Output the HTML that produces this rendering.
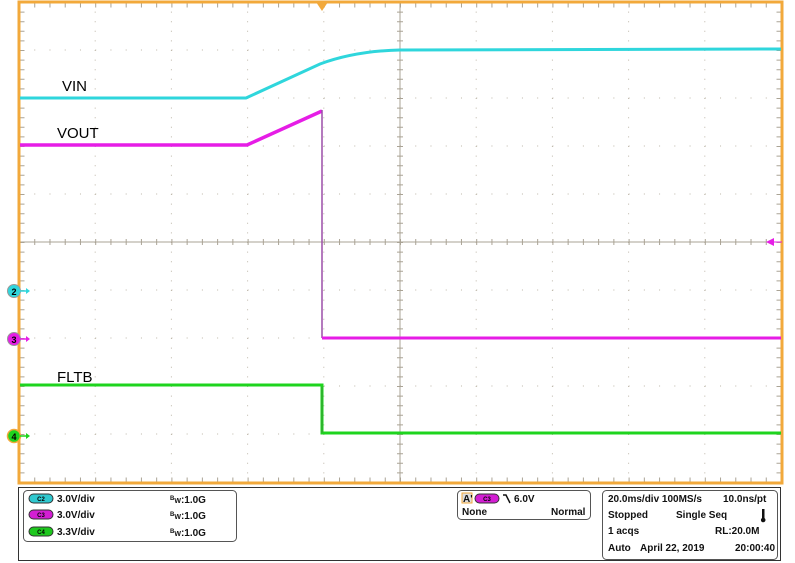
<!DOCTYPE html>
<html><head><meta charset="utf-8"><style>
html,body{margin:0;padding:0;background:#fff;width:795px;height:563px;overflow:hidden}
svg{display:block}
text{font-family:"Liberation Sans",Arial,sans-serif}
.b{font-weight:bold;font-size:10px;fill:#111}
</style></head><body>
<svg width="795" height="563" viewBox="0 0 795 563">
<g stroke="#bdb6a8" stroke-width="1" fill="none">
 <!-- dotted verticals -->
 <g stroke-dasharray="1 8.6">
  <line x1="95.2" y1="2" x2="95.2" y2="483"/><line x1="171.4" y1="2" x2="171.4" y2="483"/>
  <line x1="247.6" y1="2" x2="247.6" y2="483"/><line x1="323.8" y1="2" x2="323.8" y2="483"/>
  <line x1="476.2" y1="2" x2="476.2" y2="483"/><line x1="552.4" y1="2" x2="552.4" y2="483"/>
  <line x1="628.6" y1="2" x2="628.6" y2="483"/><line x1="704.8" y1="2" x2="704.8" y2="483"/>
 </g>
 <g stroke-dasharray="1 14.24">
  <line x1="19" y1="50" x2="782" y2="50"/><line x1="19" y1="98" x2="782" y2="98"/>
  <line x1="19" y1="146" x2="782" y2="146"/><line x1="19" y1="194" x2="782" y2="194"/>
  <line x1="19" y1="290" x2="782" y2="290"/><line x1="19" y1="338" x2="782" y2="338"/>
  <line x1="19" y1="386" x2="782" y2="386"/><line x1="19" y1="434" x2="782" y2="434"/>
 </g>
 <!-- center lines -->
 <line x1="19" y1="242" x2="782" y2="242" stroke="#aaa395"/>
 <line x1="400" y1="2" x2="400" y2="483" stroke="#aaa395"/>
 <line x1="19" y1="242" x2="782" y2="242" stroke="#aaa395" stroke-width="6" stroke-dasharray="1 14.24"/>
 <line x1="400" y1="2" x2="400" y2="483" stroke="#aaa395" stroke-width="6" stroke-dasharray="1 8.6"/>
 <!-- border ticks -->
 <line x1="19" y1="5" x2="782" y2="5" stroke="#aaa395" stroke-width="5" stroke-dasharray="1 14.24"/>
 <line x1="19" y1="480" x2="782" y2="480" stroke="#aaa395" stroke-width="5" stroke-dasharray="1 14.24"/>
 <line x1="22" y1="2" x2="22" y2="483" stroke="#aaa395" stroke-width="5" stroke-dasharray="1 8.6"/>
 <line x1="779" y1="2" x2="779" y2="483" stroke="#aaa395" stroke-width="5" stroke-dasharray="1 8.6"/>
</g>
<rect x="19" y="2" width="763" height="481" fill="none" stroke="#f2a93b" stroke-width="3"/>
<!-- traces -->
<path d="M20 98 L246 98 L320 64 Q355 51 400 50 L781 49" fill="none" stroke="#2fd6dc" stroke-width="3"/>
<path d="M20 145 L247 145 L322 111" fill="none" stroke="#e61de6" stroke-width="3.5"/>
<line x1="322" y1="110" x2="322" y2="338" stroke="#9b4fa8" stroke-width="1.5"/>
<line x1="322" y1="338" x2="781" y2="338" stroke="#e61de6" stroke-width="3"/>
<path d="M20 385 L322 385 L322 433 L781 433" fill="none" stroke="#1ed41e" stroke-width="3"/>
<line x1="322" y1="387" x2="322" y2="433" stroke="#3a9a3a" stroke-width="1"/>
<!-- labels -->
<text x="62" y="91" font-size="15">VIN</text>
<text x="57" y="138" font-size="15">VOUT</text>
<text x="57" y="382" font-size="15">FLTB</text>
<!-- markers -->
<polygon points="316,2 328,2 322,11" fill="#f2a93b"/>
<polygon points="766,242 774,238 774,246" fill="#e61de6"/><line x1="772" y1="242" x2="782" y2="242" stroke="#e61de6"/>
<circle cx="14" cy="291" r="6.5" fill="#2fd6dc" stroke="#999" stroke-width="1"/><text x="14" y="295" font-size="9" text-anchor="middle" font-weight="bold">2</text>
<path d="M20 291 H27" stroke="#2fd6dc" stroke-width="1.5"/><polygon points="26,288 30,291 26,294" fill="#2fd6dc"/>
<circle cx="14" cy="339" r="6.5" fill="#e61de6" stroke="#999" stroke-width="1"/><text x="14" y="343" font-size="9" text-anchor="middle" font-weight="bold">3</text>
<path d="M20 339 H27" stroke="#e61de6" stroke-width="1.5"/><polygon points="26,336 30,339 26,342" fill="#e61de6"/>
<circle cx="14" cy="436" r="6.5" fill="#1ed41e" stroke="#f2a93b" stroke-width="1.5"/><text x="14" y="440" font-size="9" text-anchor="middle" font-weight="bold">4</text>
<path d="M20 436 H27" stroke="#1ed41e" stroke-width="1.5"/><polygon points="26,433 30,436 26,439" fill="#1ed41e"/>
<!-- bottom panel -->
<rect x="18.5" y="487.5" width="762" height="73" fill="#fff" stroke="#333" stroke-width="1"/>
<rect x="23.5" y="490.5" width="213" height="51" rx="4" fill="#fff" stroke="#555"/>
<rect x="457.5" y="490.5" width="133" height="29" rx="4" fill="#fff" stroke="#555"/>
<rect x="602.5" y="490.5" width="175" height="69" rx="4" fill="#fff" stroke="#555"/>
<g font-size="6" font-weight="bold" text-anchor="middle">
<rect x="29" y="494" width="24" height="9" rx="4.5" fill="#2fc8cf" stroke="#333"/><text x="41" y="501">C2</text>
<rect x="29" y="510" width="24" height="9" rx="4.5" fill="#d31ed3" stroke="#333"/><text x="41" y="517">C3</text>
<rect x="29" y="527" width="24" height="9" rx="4.5" fill="#1ec81e" stroke="#333"/><text x="41" y="534">C4</text>
<rect x="475" y="494" width="24" height="9" rx="4.5" fill="#d31ed3" stroke="#333"/><text x="487" y="501">C3</text>
</g>
<text class="b" x="57" y="502">3.0V/div</text>
<text class="b" x="57" y="518">3.0V/div</text>
<text class="b" x="57" y="535">3.3V/div</text>
<text class="b" x="170" y="503"><tspan font-size="6" dy="-3">B</tspan><tspan font-size="7" dy="3">W</tspan>:1.0G</text>
<text class="b" x="170" y="519"><tspan font-size="6" dy="-3">B</tspan><tspan font-size="7" dy="3">W</tspan>:1.0G</text>
<text class="b" x="170" y="536"><tspan font-size="6" dy="-3">B</tspan><tspan font-size="7" dy="3">W</tspan>:1.0G</text>
<rect x="462" y="493" width="10" height="10" fill="#ddd" stroke="#f2a93b"/><text class="b" x="463" y="502" font-size="8">A'</text>
<path d="M503 495 L506 495 L510 503" fill="none" stroke="#111" stroke-width="1.5"/>
<text class="b" x="514" y="502">6.0V</text>
<text class="b" x="462" y="515">None</text>
<text class="b" x="551" y="515">Normal</text>
<text class="b" x="608" y="502">20.0ms/div 100MS/s</text>
<text class="b" x="723" y="502">10.0ns/pt</text>
<text class="b" x="608" y="518">Stopped</text>
<text class="b" x="676" y="518">Single Seq</text>
<rect x="762" y="509" width="2.5" height="10" fill="#111"/><circle cx="763.2" cy="520" r="2.3" fill="#111"/>
<text class="b" x="608" y="534">1 acqs</text>
<text class="b" x="715" y="534">RL:20.0M</text>
<text class="b" x="608" y="551">Auto</text>
<text class="b" x="640" y="551">April 22, 2019</text>
<text class="b" x="735" y="551">20:00:40</text>
</svg>
</body></html>
